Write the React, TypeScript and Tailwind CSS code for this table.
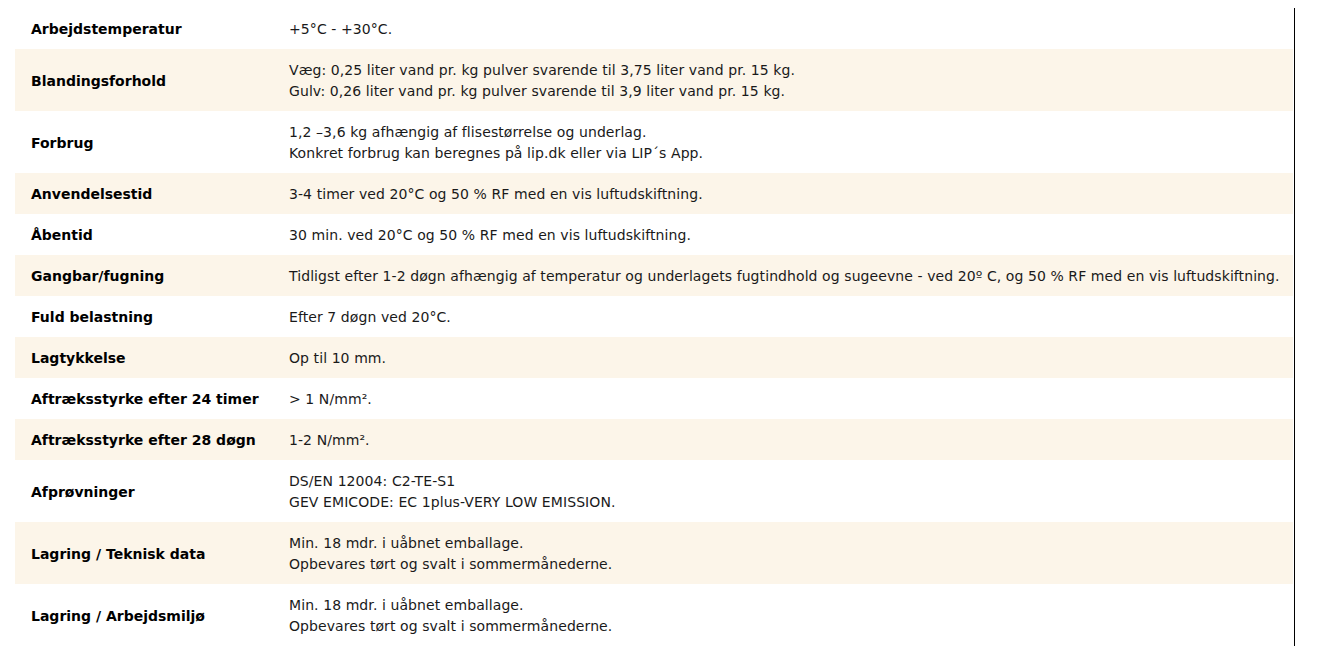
const rows: { label: string; lines: string[] }[] = [
  { label: "Arbejdstemperatur", lines: ["+5°C - +30°C."] },
  {
    label: "Blandingsforhold",
    lines: [
      "Væg: 0,25 liter vand pr. kg pulver svarende til 3,75 liter vand pr. 15 kg.",
      "Gulv: 0,26 liter vand pr. kg pulver svarende til 3,9 liter vand pr. 15 kg.",
    ],
  },
  {
    label: "Forbrug",
    lines: [
      "1,2 –3,6 kg afhængig af flisestørrelse og underlag.",
      "Konkret forbrug kan beregnes på lip.dk eller via LIP´s App.",
    ],
  },
  { label: "Anvendelsestid", lines: ["3-4 timer ved 20°C og 50 % RF med en vis luftudskiftning."] },
  { label: "Åbentid", lines: ["30 min. ved 20°C og 50 % RF med en vis luftudskiftning."] },
  {
    label: "Gangbar/fugning",
    lines: [
      "Tidligst efter 1-2 døgn afhængig af temperatur og underlagets fugtindhold og sugeevne - ved 20º C, og 50 % RF med en vis luftudskiftning.",
    ],
  },
  { label: "Fuld belastning", lines: ["Efter 7 døgn ved 20°C."] },
  { label: "Lagtykkelse", lines: ["Op til 10 mm."] },
  { label: "Aftræksstyrke efter 24 timer", lines: ["> 1 N/mm²."] },
  { label: "Aftræksstyrke efter 28 døgn", lines: ["1-2 N/mm²."] },
  {
    label: "Afprøvninger",
    lines: ["DS/EN 12004: C2-TE-S1", "GEV EMICODE: EC 1plus-VERY LOW EMISSION."],
  },
  {
    label: "Lagring / Teknisk data",
    lines: ["Min. 18 mdr. i uåbnet emballage.", "Opbevares tørt og svalt i sommermånederne."],
  },
  {
    label: "Lagring / Arbejdsmiljø",
    lines: ["Min. 18 mdr. i uåbnet emballage.", "Opbevares tørt og svalt i sommermånederne."],
  },
]

export default function App() {
  return (
    <div
      className="min-h-[670px] bg-white pt-2 pl-[15px] text-[14px] text-[#1a1a1a]"
      style={{ fontFamily: "'DejaVu Sans', Verdana, sans-serif" }}
    >
      <div className="flex">
        {/* Tabel */}
        <div className="w-[1278px]">
          {rows.map((row, i) => (
            <div
              key={row.label}
              className={`flex items-center pt-[11px] pb-[9px] leading-[21px] ${
                i % 2 === 1 ? "bg-[#fcf5e9]" : "bg-white"
              }`}
            >
              <div className="w-[274px] shrink-0 pl-4 font-bold text-black">{row.label}</div>
              <div className="flex-1 pr-3 tracking-[0.08px]">
                {row.lines.map((line) => (
                  <div key={line}>{line}</div>
                ))}
              </div>
            </div>
          ))}
        </div>
        <div className="ml-px w-px bg-black" />
      </div>
    </div>
  )
}
